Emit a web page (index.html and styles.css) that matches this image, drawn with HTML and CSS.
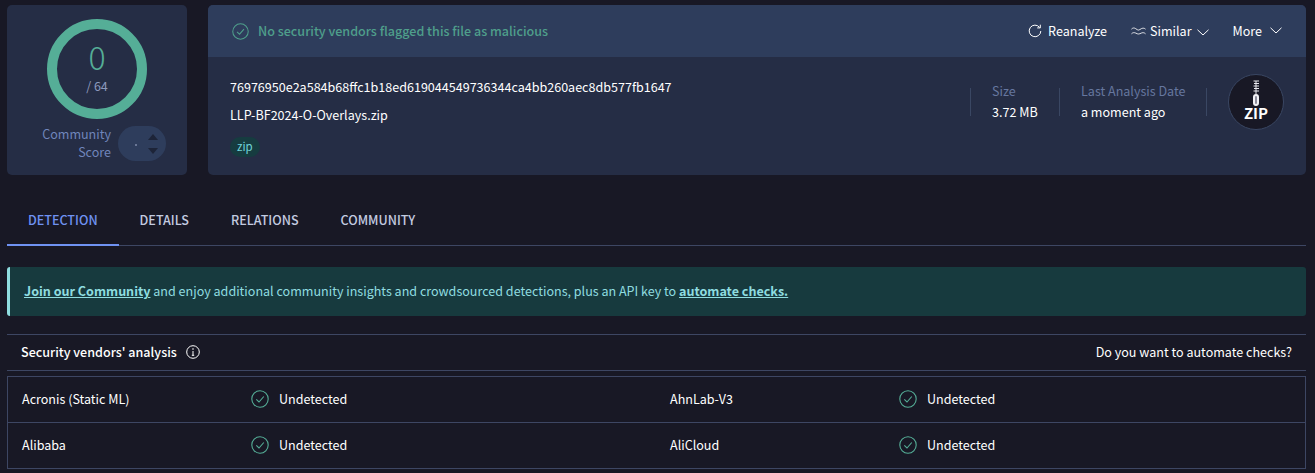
FILE: index.html
```html
<!DOCTYPE html>
<html lang="en">
<head>
<meta charset="utf-8">
<title>VirusTotal - File</title>
<link rel="stylesheet" href="styles.css">
</head>
<body>
<main class="page">
  <section class="top">
    <div class="score-card">
      <div class="ring">
        <svg class="ring-svg" viewBox="0 0 100 100" aria-hidden="true"><circle cx="50" cy="50" r="45" fill="none" stroke="#55ae97" stroke-width="10"/></svg>
        <div class="ring-num">0</div>
        <div class="ring-total">/ 64</div>
      </div>
      <div class="community">
        <div class="community-label">Community<br>Score</div>
        <div class="community-pill">
          <span class="pill-dot"></span>
          <span class="pill-arrows">
            <svg viewBox="0 0 10 6" class="arrow"><path d="M0 6 5 0l5 6z" fill="#1d2438"/></svg>
            <svg viewBox="0 0 10 6" class="arrow"><path d="M0 0h10L5 6z" fill="#1d2438"/></svg>
          </span>
        </div>
      </div>
    </div>
    <div class="file-card">
      <header class="file-head">
        <div class="verdict">
          <svg class="ico-check" viewBox="0 0 18 18" aria-hidden="true"><circle cx="9" cy="9" r="8.200" fill="none" stroke="#4f9f8b" stroke-width="1.100"/><path d="M5.300 9.300 8 11.800l4.700-5.300" fill="none" stroke="#4f9f8b" stroke-width="1.100"/></svg>
          <span>No security vendors flagged this file as malicious</span>
        </div>
        <nav class="actions">
          <span class="action act-re">
            <svg class="ico-14" viewBox="0 0 14 14" aria-hidden="true"><path d="M11.600 3.400A5.800 5.800 0 1 0 12.800 7" fill="none" stroke="#fff" stroke-width="1"/><path d="M12.300.7v3.200H9.200" fill="none" stroke="#fff" stroke-width="1"/></svg>
            Reanalyze
          </span>
          <span class="action act-sim">
            <svg class="ico-sim" viewBox="0 0 16 10" aria-hidden="true"><path d="M.5 3c1.500-1.500 3-1.500 4.500-.5s2 1.500 3 1.500 2-1 3-1.500 3-1 4.500.5M.5 8c1.500-1.500 3-1.500 4.500-.8s2 1 3 1 2-.5 3-1 3-.8 4.500.8" fill="none" stroke="#fff" stroke-width=".9"/></svg>
            Similar
            <svg class="ico-chev" viewBox="0 0 12 7" aria-hidden="true"><path d="M.5.800 6 6l5.500-5.200" fill="none" stroke="#fff" stroke-width="1"/></svg>
          </span>
          <span class="action act-more">
            More
            <svg class="ico-chev chev-more" viewBox="0 0 12 7" aria-hidden="true"><path d="M.5.800 6 6l5.500-5.200" fill="none" stroke="#fff" stroke-width="1"/></svg>
          </span>
        </nav>
      </header>
      <div class="file-body">
        <div class="file-id">
          <div class="hash">76976950e2a584b68ffc1b18ed619044549736344ca4bb260aec8db577fb1647</div>
          <div class="fname">LLP-BF2024-O-Overlays.zip</div>
          <span class="tag">zip</span>
        </div>
        <div class="meta">
          <div class="meta-col col-size"><div class="meta-k">Size</div><div class="meta-v">3.72 MB</div></div>
          <div class="meta-col col-date"><div class="meta-k">Last Analysis Date</div><div class="meta-v">a moment ago</div></div>
          <div class="meta-rule"></div>
          <div class="zip">
            <svg class="zip-pull" viewBox="0 0 10 26" aria-hidden="true"><path d="M2.500 1H8M5 1v2.500M3 3.500h5M5 3.500V6M2.500 6H8M5 6v2.500M3 8.500h5M5 8.500V11M2.500 11H8M5 11v3" fill="none" stroke="#e8e8ee" stroke-width="1"/><rect x="3" y="15" width="4" height="10" rx="2" fill="#8d8d9c" stroke="#f2f2f6" stroke-width="2"/></svg>
            <span class="zip-text">ZIP</span>
          </div>
        </div>
      </div>
    </div>
  </section>

  <nav class="tabs">
    <a class="tab tab-active">DETECTION</a>
    <a class="tab">DETAILS</a>
    <a class="tab">RELATIONS</a>
    <a class="tab">COMMUNITY</a>
  </nav>

  <div class="banner"><a class="banner-link">Join our Community</a> and enjoy additional community insights and crowdsourced detections, plus an API key to <a class="banner-link">automate checks.</a></div>

  <section class="analysis">
    <div class="analysis-head">
      <div class="analysis-title">Security vendors' analysis
        <svg class="ico-info" viewBox="0 0 14 14" aria-hidden="true"><circle cx="7" cy="7" r="6.300" fill="none" stroke="#fff" stroke-width="1"/><path d="M7 6v4.300M5.800 10.300h2.400" fill="none" stroke="#fff" stroke-width="1"/><circle cx="7" cy="4" r=".8" fill="#fff"/></svg>
      </div>
      <div class="analysis-cta">Do you want to automate checks?</div>
    </div>
    <div class="vendors">
      <div class="row">
        <div class="vendor">Acronis (Static ML)</div>
        <div class="result"><svg class="ico-res" viewBox="0 0 18 18" aria-hidden="true"><circle cx="9" cy="9" r="8.200" fill="none" stroke="#55ae97" stroke-width="1.100"/><path d="M5.300 9.300 8 12l4.800-5.500" fill="none" stroke="#55ae97" stroke-width="1.100"/></svg>Undetected</div>
        <div class="vendor">AhnLab-V3</div>
        <div class="result"><svg class="ico-res" viewBox="0 0 18 18" aria-hidden="true"><circle cx="9" cy="9" r="8.200" fill="none" stroke="#55ae97" stroke-width="1.100"/><path d="M5.300 9.300 8 12l4.800-5.500" fill="none" stroke="#55ae97" stroke-width="1.100"/></svg>Undetected</div>
      </div>
      <div class="row">
        <div class="vendor">Alibaba</div>
        <div class="result"><svg class="ico-res" viewBox="0 0 18 18" aria-hidden="true"><circle cx="9" cy="9" r="8.200" fill="none" stroke="#55ae97" stroke-width="1.100"/><path d="M5.300 9.300 8 12l4.800-5.500" fill="none" stroke="#55ae97" stroke-width="1.100"/></svg>Undetected</div>
        <div class="vendor">AliCloud</div>
        <div class="result"><svg class="ico-res" viewBox="0 0 18 18" aria-hidden="true"><circle cx="9" cy="9" r="8.200" fill="none" stroke="#55ae97" stroke-width="1.100"/><path d="M5.300 9.300 8 12l4.800-5.500" fill="none" stroke="#55ae97" stroke-width="1.100"/></svg>Undetected</div>
      </div>
    </div>
  </section>
</main>
</body>
</html>
```
FILE: styles.css
```css
* { box-sizing: border-box; }
html, body { margin: 0; height: 100%; overflow: hidden; }
body {
  background: #181825;
  color: #fff;
  font-family: "Noto Sans CJK SC", "Noto Sans", "Liberation Sans", sans-serif;
  font-size: 12.550px;
  line-height: 18px;
}
svg { display: block; flex: none; }
.page { padding: 5px 9px 0 7px; }

.top { display: flex; gap: 21px; height: 170px; }
.score-card {
  width: 180px; flex: none;
  background: #252d45;
  border-radius: 5px;
  padding: 14px 0 0;
}
.ring { position: relative; width: 100px; height: 100px; margin-left: 40px; text-align: center; }
.ring-svg { position: absolute; inset: 0; width: 100px; height: 100px; }
.ring-num { padding-top: 21px; font-size: 32px; line-height: 32px; color: #55ae97; font-weight: 300; }
.ring-total { line-height: 18px; color: #8d99bd; margin-top: 5px; }
.community { display: flex; align-items: center; margin: 7px 0 0 35px; gap: 7px; }
.community-label { text-align: right; color: #7085bb; line-height: 18px; width: 69px; margin-top: -2px; }
.community-pill {
  width: 48px; height: 35px; border-radius: 18px;
  background: #2e3d5c;
  display: flex; align-items: center;
  padding-left: 17px; gap: 11px;
}
.pill-dot { width: 2px; height: 2px; border-radius: 50%; background: #7e8aa8; margin-top: 2px; }
.pill-arrows { display: flex; flex-direction: column; gap: 8px; }
.arrow { width: 10px; height: 6px; }

.file-card { flex: 1; background: #252d45; border-radius: 5px; overflow: hidden; }
.file-head {
  height: 52px; background: #2e3d5c;
  display: flex; align-items: center; justify-content: space-between;
  padding: 0 24px 0 24px;
}
.verdict { display: flex; align-items: center; gap: 9px; color: #4f9f8b; font-weight: 500; }
.ico-check { width: 17px; height: 17px; }
.actions { display: flex; align-items: center; }
.action { display: flex; align-items: center; font-weight: 400; }
.ico-14 { width: 14px; height: 14px; margin-right: 6px; }
.act-sim { margin-left: 24px; }
.ico-sim { width: 15px; height: 10px; margin-right: 4px; }
.ico-chev { width: 12px; height: 7px; margin-left: 5px; margin-top: 2px; }
.act-more { margin-left: 24px; }
.chev-more { margin-left: 8px; margin-top: -2px; }

.file-body { display: flex; justify-content: space-between; padding: 21px 22px 0 22px; }
.hash { line-height: 18px; }
.fname { line-height: 18px; margin-top: 10px; }
.tag {
  display: inline-block; margin-top: 13px; padding: 0 7px;
  height: 20px; line-height: 19px; border-radius: 10px;
  background: #163c40; color: #6fd3d8; font-size: 11.500px;
}
.meta { display: flex; align-items: flex-start; margin-top: -4px; }
.meta-col { height: 28px; border-left: 1px solid #3a4763; margin-top: 14px; padding-left: 21px; }
.col-size { width: 89px; }
.col-date { width: 147px; }
.meta-k { color: #66779f; margin-top: -6px; }
.meta-v { margin-top: 3px; }
.meta-rule { width: 1px; height: 28px; background: #3a4763; margin-top: 14px; }
.zip {
  width: 56px; height: 56px; margin-left: 21px;
  border-radius: 50%; background: #181825; border: 1px solid #3a4763;
  display: flex; flex-direction: column; align-items: center; padding-top: 5px;
}
.zip-pull { width: 10px; height: 26px; }
.zip-text { font-size: 15px; line-height: 14px; font-weight: 700; }

.tabs { display: flex; height: 41px; margin-top: 30px; border-bottom: 1px solid #3d4663; }
.tab {
  padding: 0 21px; height: 41px; line-height: 29px;
  font-weight: 500; color: #c3cbe0;
}
.tab-active { color: #6f92f2; border-bottom: 2px solid #6f92f2; }

.banner {
  margin-top: 21px; height: 49px; line-height: 47px;
  background: #173a3e; color: #8fdde0;
  border-left: 3px solid #8fdde0; border-radius: 3px;
  padding-left: 14px;
}
.banner-link { font-weight: 700; text-decoration: underline; }

.analysis { margin-top: 18px; }
.analysis-head {
  height: 37px;
  border-top: 1px solid #3d4663; border-bottom: 1px solid #3d4663;
  display: flex; align-items: center; justify-content: space-between;
  padding: 0 14px 2px;
}
.analysis-title { display: flex; align-items: center; gap: 9px; font-weight: 500; }
.ico-info { width: 14px; height: 14px; }
.analysis-cta { font-weight: 400; }
.vendors { margin-top: 5px; border: 1px solid #3d4663; border-bottom: 0; }
.row {
  display: grid; grid-template-columns: 229px 419px 229px 1fr;
  height: 46px; align-items: center;
  border-bottom: 1px solid #3d4663;
  padding: 0 0 2px 14px;
}
.result { display: flex; align-items: center; gap: 10px; }
.ico-res { width: 18px; height: 18px; }
```
